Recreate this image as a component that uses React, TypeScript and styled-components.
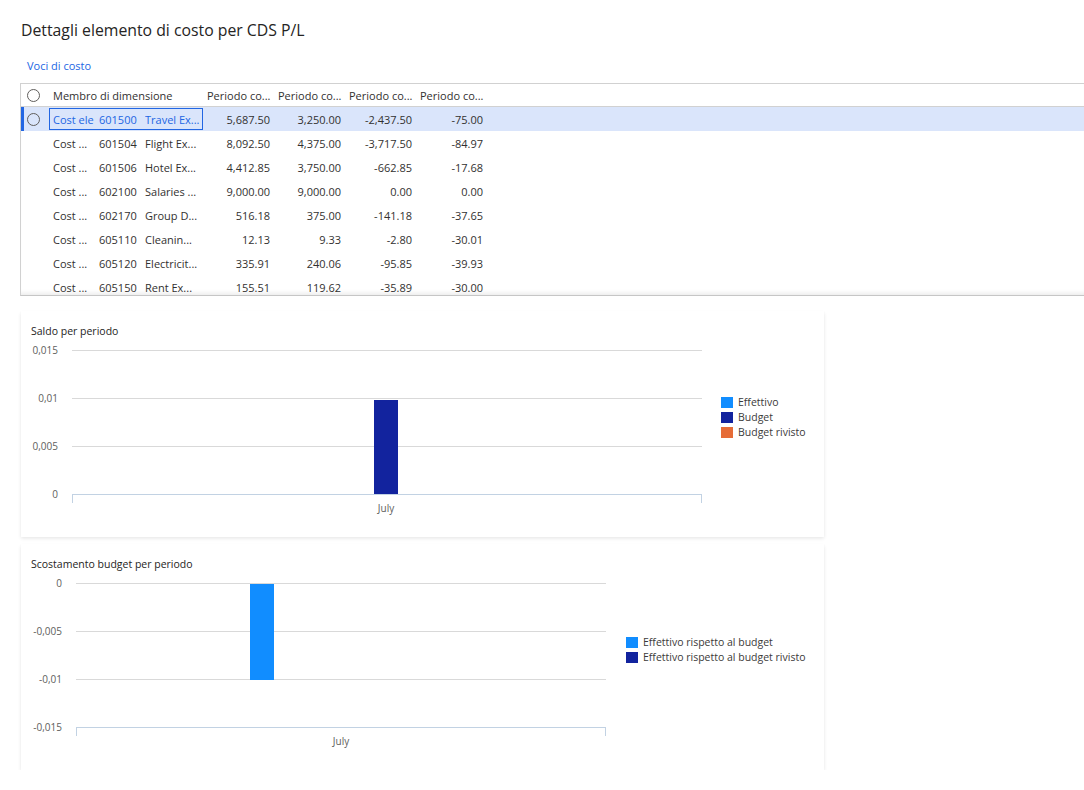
import styled, { createGlobalStyle, css } from 'styled-components';

const GlobalStyle = createGlobalStyle`
  html, body {
    margin: 0;
    padding: 0;
    background: #ffffff;
  }
  body {
    font-family: "Segoe UI", "Open Sans", "Noto Sans", sans-serif;
    color: #323130;
  }
`;

const Page = styled.div`
  height: 770px;
  overflow: hidden;
  padding-left: 20px;
`;

const Title = styled.h1`
  margin: 0;
  padding: 19px 0 0 1px;
  font-size: 15.8px;
  line-height: 22px;
  font-weight: 400;
  color: #252423;
`;

const TabLink = styled.a`
  display: block;
  margin-top: 17px;
  padding-left: 7px;
  font-size: 11px;
  line-height: 16px;
  color: #2266e3;
  text-decoration: none;
`;

const Grid = styled.div`
  margin-top: 9px;
  height: 213px;
  box-sizing: border-box;
  border-top: 1px solid #d1d1d1;
  border-left: 1px solid #d1d1d1;
  border-bottom: 1px solid #c6c6c6;
  box-shadow: inset 0 -5px 4px -3px rgba(0, 0, 0, 0.08);
  overflow: hidden;
  font-size: 11px;
`;

const columns = '28px 154px 71px 71px 71px 71px 1fr';

const HeaderRow = styled.div`
  display: grid;
  grid-template-columns: ${columns};
  height: 23px;
  box-sizing: border-box;
  border-bottom: 1px solid #d1d1d1;
  align-items: center;
`;

const Row = styled.div<{ $selected?: boolean }>`
  display: grid;
  grid-template-columns: ${columns};
  height: 24px;
  align-items: center;
  ${(p) =>
    p.$selected &&
    css`
      background: #dae5fb;
      box-shadow: inset 3px 0 0 #2266e3;
    `}
`;

const RadioCell = styled.div`
  display: flex;
  align-items: center;
  padding-left: 6px;
`;

const Radio = styled.span`
  display: inline-block;
  width: 11px;
  height: 11px;
  border-radius: 50%;
  border: 1px solid #605e5c;
  background: transparent;
`;

const HeadCell = styled.div`
  padding-left: 4px;
  white-space: nowrap;
  overflow: hidden;
  color: #323130;
`;

const MemberCell = styled.div<{ $focused?: boolean }>`
  display: flex;
  align-items: center;
  height: 22px;
  box-sizing: border-box;
  padding-left: 3px;
  border: 1px solid ${(p) => (p.$focused ? '#2266e3' : 'transparent')};
  color: ${(p) => (p.$focused ? '#2266e3' : '#323130')};
`;

const Field = styled.span<{ $w?: number }>`
  flex: ${(p) => (p.$w ? `0 0 ${p.$w}px` : '1 1 auto')};
  margin-right: ${(p) => (p.$w ? 4 : 0)}px;
  white-space: nowrap;
  overflow: hidden;
`;

const NumCell = styled.div`
  text-align: right;
  padding-right: 4px;
  white-space: nowrap;
`;

const Card = styled.section<{ $gap: number }>`
  width: 803px;
  height: 226px;
  margin: ${(p) => p.$gap}px 0 0 1px;
  background: #ffffff;
  box-shadow: 0 1.6px 3.6px rgba(0, 0, 0, 0.1), 0 0.3px 0.9px rgba(0, 0, 0, 0.08);
`;

const CardTitle = styled.div`
  padding: 13px 10px 0;
  height: 30px;
  box-sizing: border-box;
  font-size: 10.5px;
  line-height: 14px;
  color: #252423;
`;

const ChartBody = styled.div`
  display: flex;
  align-items: flex-start;
`;

const Legend = styled.div<{ $top: number; $left: number }>`
  margin: ${(p) => p.$top}px 0 0 ${(p) => p.$left}px;
  display: flex;
  flex-direction: column;
  gap: 4px;
`;

const LegendItem = styled.div`
  display: flex;
  align-items: center;
  gap: 5px;
  font-size: 10.5px;
  line-height: 11px;
  color: #3b3a39;
  white-space: nowrap;
`;

const Swatch = styled.span<{ $color: string }>`
  width: 12px;
  height: 11px;
  background: ${(p) => p.$color};
`;

const rows = [
  ['601500', 'Travel Ex...', '5,687.50', '3,250.00', '-2,437.50', '-75.00'],
  ['601504', 'Flight Ex...', '8,092.50', '4,375.00', '-3,717.50', '-84.97'],
  ['601506', 'Hotel Ex...', '4,412.85', '3,750.00', '-662.85', '-17.68'],
  ['602100', 'Salaries ...', '9,000.00', '9,000.00', '0.00', '0.00'],
  ['602170', 'Group D...', '516.18', '375.00', '-141.18', '-37.65'],
  ['605110', 'Cleanin...', '12.13', '9.33', '-2.80', '-30.01'],
  ['605120', 'Electricit...', '335.91', '240.06', '-95.85', '-39.93'],
  ['605150', 'Rent Ex...', '155.51', '119.62', '-35.89', '-30.00'],
];

const BLUE = '#118dff';
const NAVY = '#12239e';
const ORANGE = '#e66c37';

type Tick = { label: string; y: number };

function BarChart({
  ticks,
  labelX,
  x0,
  x1,
  bar,
  color,
  axisY,
  monthX,
}: {
  ticks: Tick[];
  labelX: number;
  x0: number;
  x1: number;
  bar: { x: number; y0: number; y1: number };
  color: string;
  axisY: number;
  monthX: number;
}) {
  return (
    <svg width={x1 + 16} height={190} style={{ display: 'block' }}>
      {ticks.map((t) => (
        <g key={t.label}>
          <text
            x={labelX}
            y={t.y + 1}
            textAnchor="end"
            dominantBaseline="middle"
            fontSize="10"
            fill="#605e5c"
            fontFamily='"Segoe UI", "Open Sans", sans-serif'
          >
            {t.label}
          </text>
          {t.y !== axisY && <line x1={x0} x2={x1} y1={t.y + 0.5} y2={t.y + 0.5} stroke="#d9d9d9" />}
        </g>
      ))}
      <rect x={bar.x} y={bar.y0} width={24} height={bar.y1 - bar.y0} fill={color} />
      <line x1={x0} x2={x1} y1={axisY + 0.5} y2={axisY + 0.5} stroke="#c2d2e3" />
      <line x1={x0 + 0.5} x2={x0 + 0.5} y1={axisY} y2={axisY + 9} stroke="#c2d2e3" />
      <line x1={x1 - 0.5} x2={x1 - 0.5} y1={axisY} y2={axisY + 9} stroke="#c2d2e3" />
      <text
        x={monthX}
        y={axisY + 15}
        textAnchor="middle"
        dominantBaseline="middle"
        fontSize="10"
        fill="#605e5c"
        fontFamily='"Segoe UI", "Open Sans", sans-serif'
      >
        July
      </text>
    </svg>
  );
}

export default function App() {
  return (
    <>
      <GlobalStyle />
      <Page>
        <Title>Dettagli elemento di costo per CDS P/L</Title>
        <TabLink>Voci di costo</TabLink>

        <Grid>
          <HeaderRow>
            <RadioCell>
              <Radio />
            </RadioCell>
            <HeadCell>Membro di dimensione</HeadCell>
            <HeadCell>Periodo co...</HeadCell>
            <HeadCell>Periodo co...</HeadCell>
            <HeadCell>Periodo co...</HeadCell>
            <HeadCell>Periodo co...</HeadCell>
            <div />
          </HeaderRow>
          {rows.map((r, i) => (
            <Row key={r[0]} $selected={i === 0}>
              <RadioCell>{i === 0 && <Radio />}</RadioCell>
              <MemberCell $focused={i === 0}>
                <Field $w={42}>{i === 0 ? 'Cost ele' : 'Cost ...'}</Field>
                <Field $w={42}>{r[0]}</Field>
                <Field>{r[1]}</Field>
              </MemberCell>
              <NumCell>{r[2]}</NumCell>
              <NumCell>{r[3]}</NumCell>
              <NumCell>{r[4]}</NumCell>
              <NumCell>{r[5]}</NumCell>
              <div />
            </Row>
          ))}
        </Grid>

        <Card $gap={15}>
          <CardTitle>Saldo per periodo</CardTitle>
          <ChartBody>
            <BarChart
              ticks={[
                { label: '0,015', y: 9 },
                { label: '0,01', y: 57 },
                { label: '0,005', y: 105 },
                { label: '0', y: 153 },
              ]}
              labelX={37}
              x0={51}
              x1={681}
              bar={{ x: 353, y0: 59, y1: 153 }}
              color={NAVY}
              axisY={153}
              monthX={365}
            />
            <Legend $top={56} $left={3}>
              <LegendItem>
                <Swatch $color={BLUE} />
                Effettivo
              </LegendItem>
              <LegendItem>
                <Swatch $color={NAVY} />
                Budget
              </LegendItem>
              <LegendItem>
                <Swatch $color={ORANGE} />
                Budget rivisto
              </LegendItem>
            </Legend>
          </ChartBody>
        </Card>

        <Card $gap={7}>
          <CardTitle>Scostamento budget per periodo</CardTitle>
          <ChartBody>
            <BarChart
              ticks={[
                { label: '0', y: 9 },
                { label: '-0,005', y: 57 },
                { label: '-0,01', y: 105 },
                { label: '-0,015', y: 153 },
              ]}
              labelX={41}
              x0={55}
              x1={585}
              bar={{ x: 229, y0: 10, y1: 106 }}
              color={BLUE}
              axisY={153}
              monthX={320}
            />
            <Legend $top={63} $left={4}>
              <LegendItem>
                <Swatch $color={BLUE} />
                Effettivo rispetto al budget
              </LegendItem>
              <LegendItem>
                <Swatch $color={NAVY} />
                Effettivo rispetto al budget rivisto
              </LegendItem>
            </Legend>
          </ChartBody>
        </Card>
      </Page>
    </>
  );
}
